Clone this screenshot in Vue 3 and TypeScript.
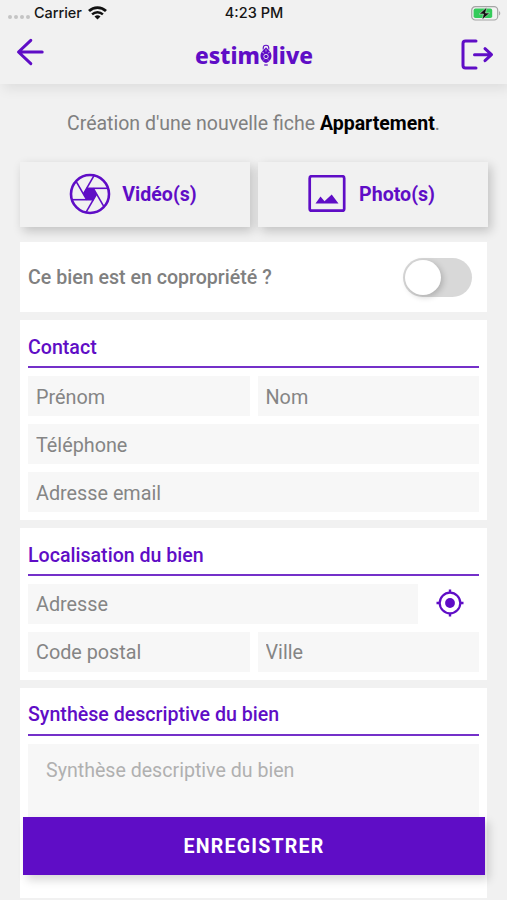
<script setup lang="ts">
import { ref } from 'vue'

const coOwned = ref(false)
const firstName = ref('')
const lastName = ref('')
const phone = ref('')
const email = ref('')
const address = ref('')
const postcode = ref('')
const city = ref('')
const summary = ref('')

const blades: number[] = [0, 60, 120, 180, 240, 300]
</script>

<template>
  <div class="screen">
    <header class="top">
      <div class="status">
        <div class="carrier">
          <span class="dots"><i></i><i></i><i></i><i></i></span>
          <span>Carrier</span>
          <svg class="wifi" width="19" height="14" viewBox="0 0 19 14">
            <path d="M1 5.1a12.2 12.2 0 0 1 17 0" fill="none" stroke="#111" stroke-width="2.8" />
            <path d="M4.1 8.4a7.8 7.8 0 0 1 10.8 0" fill="none" stroke="#111" stroke-width="2.4" />
            <path d="M9.5 13.6 6.5 10.6a4.3 4.3 0 0 1 6 0z" fill="#111" />
          </svg>
        </div>
        <div class="time">4:23 PM</div>
        <svg class="battery" width="30" height="15" viewBox="0 0 30 15">
          <rect x=".7" y=".7" width="26" height="13.3" rx="3.6" fill="none" stroke="#a5a5a5" stroke-width="1.2" />
          <rect x="2.6" y="2.6" width="18.6" height="9.5" rx="1.8" fill="#35cb5b" />
          <path d="M28.1 5v4.6c1.6-.7 1.6-3.9 0-4.6z" fill="#a5a5a5" />
          <path d="M15.8 1.2 8.2 8h4.3l-1.4 5.7L18.7 7h-4.2z" fill="#111" stroke="#f1f1f1" stroke-width=".5" />
        </svg>
      </div>
      <nav class="bar">
        <svg class="back" width="28" height="28" viewBox="0 0 28 28" fill="none" stroke="#5f0dc6" stroke-width="3" stroke-linecap="round" stroke-linejoin="round">
          <path d="M14.800 2.300 2.500 14l12.300 11.600M2.900 14h23.300" />
        </svg>
        <div class="logo">
          <span>estim</span>
          <svg width="12" height="23" viewBox="0 0 12 23">
            <path d="M3.200 5.400V4a2.800 2.800 0 0 1 5.600 0v1.400" fill="none" stroke="#5f0dc6" stroke-width="1.100" />
            <path d="M6 3.200c2 2.600 5.500 4.400 5.500 8.600 0 3.600-2.200 6.200-5.500 7.200C2.700 18 .5 15.400.5 11.800.5 7.600 4 5.800 6 3.200z" fill="#5f0dc6" />
            <path d="M2.300 8.200l1.800 1M9.700 8.200l-1.800 1M6 5.500v2M3 16.500l1-1M9 16.500l-1-1" stroke="#f1f1f1" stroke-width=".7" />
            <circle cx="6" cy="12.500" r="2.200" fill="none" stroke="#f1f1f1" stroke-width=".9" />
            <path d="M4.200 21h3.600" stroke="#5f0dc6" stroke-width="1.200" />
          </svg>
          <span>live</span>
        </div>
        <svg class="exit" width="33" height="32" viewBox="0 0 33 32" fill="none" stroke="#5f0dc6" stroke-width="3" stroke-linecap="round" stroke-linejoin="round">
          <path d="M15 2H4.500Q2 2 2 4.500v22Q2 29 4.500 29H15M13.500 15.700H30M24 9.700l6.500 6-6.500 6" />
        </svg>
      </nav>
    </header>

    <main class="content">
      <p class="intro">Création d'une nouvelle fiche <b>Appartement</b>.</p>

      <div class="media">
        <button class="tile" type="button">
          <svg width="42" height="42" viewBox="-21 -21 42 42">
            <circle r="19" fill="none" stroke="#5f0dc6" stroke-width="2.600" />
            <polygon points="-3.500,-5.700 3.500,-5.700 7,0 3.500,5.700 -3.500,5.700 -7,0" fill="#5f0dc6" />
            <path v-for="angle in blades" :key="angle" :transform="`rotate(${angle})`" d="M-3.500-5.700H18.200" fill="none" stroke="#5f0dc6" stroke-width="1.600" />
          </svg>
          <span>Vidéo(s)</span>
        </button>
        <button class="tile photo" type="button">
          <svg width="38" height="38" viewBox="0 0 38 38">
            <rect x="1.700" y="1.200" width="34.500" height="34.500" rx="2" fill="none" stroke="#5f0dc6" stroke-width="2.700" />
            <path d="M7.500 28.500 12.500 21.500l4 4.700L23.700 19.500 30.500 28.500z" fill="#5f0dc6" />
          </svg>
          <span>Photo(s)</span>
        </button>
      </div>

      <section class="card owned">
        <span>Ce bien est en copropriété ?</span>
        <button class="switch" :class="{ on: coOwned }" type="button" role="switch" :aria-checked="coOwned" @click="coOwned = !coOwned">
          <i></i>
        </button>
      </section>

      <section class="card contact">
        <h2>Contact</h2>
        <div class="row">
          <input v-model="firstName" placeholder="Prénom" />
          <input v-model="lastName" placeholder="Nom" />
        </div>
        <div class="row"><input v-model="phone" type="tel" placeholder="Téléphone" /></div>
        <div class="row"><input v-model="email" type="email" placeholder="Adresse email" /></div>
      </section>

      <section class="card place">
        <h2>Localisation du bien</h2>
        <div class="row">
          <input v-model="address" placeholder="Adresse" />
          <button class="locate" type="button">
            <svg width="28" height="28" viewBox="-14 -14 28 28">
              <circle r="10.300" fill="none" stroke="#5f0dc6" stroke-width="2.200" />
              <circle r="4.900" fill="#5f0dc6" />
              <path d="M0-13.500v3.500M0 10v3.500M-13.500 0h3.500M10 0h3.500" stroke="#5f0dc6" stroke-width="2.400" />
            </svg>
          </button>
        </div>
        <div class="row">
          <input v-model="postcode" placeholder="Code postal" />
          <input v-model="city" placeholder="Ville" />
        </div>
      </section>

      <section class="card summary">
        <h2>Synthèse descriptive du bien</h2>
        <textarea v-model="summary" placeholder="Synthèse descriptive du bien"></textarea>
      </section>
    </main>

    <button class="save" type="button">ENREGISTRER</button>
  </div>
</template>

<style>
body {
  background: #f1f1f1;
}
</style>

<style scoped>
* {
  box-sizing: border-box;
}
.screen {
  position: relative;
  height: 900px;
  overflow: hidden;
  background: #f1f1f1;
  color: #808080;
  font-family: Roboto, "Liberation Sans", sans-serif;
  font-size: 19.6px;
}
button {
  border: 0;
  padding: 0;
  font: inherit;
}
svg {
  display: block;
  flex: none;
}
.top {
  height: 84px;
  box-shadow: 3px 5px 12px rgba(0, 0, 0, 0.08);
}
.status {
  display: grid;
  grid-template-columns: 1fr auto 1fr;
  align-items: center;
  height: 26px;
  padding: 0 7px 0 8px;
  color: #151515;
  font: 500 14.5px/26px Inter, sans-serif;
}
.carrier {
  display: flex;
  align-items: center;
  letter-spacing: -0.05px;
}
.dots {
  display: flex;
  gap: 2px;
  margin: 8px 4px 0 0;
}
.dots i {
  width: 4px;
  height: 4px;
  border-radius: 50%;
  background: #c4c4c4;
}
.wifi {
  margin-left: 6px;
}
.battery {
  justify-self: end;
  margin-right: -1px;
}
.bar {
  display: grid;
  grid-template-columns: 1fr auto 1fr;
  align-items: center;
  height: 54px;
  padding: 0 13px 0 16px;
}
.back {
  margin-top: -2px;
}
.exit {
  justify-self: end;
  margin-top: 4px;
}
.logo {
  display: flex;
  align-items: center;
  color: #5f0dc6;
  font: 800 22.7px/30px "Noto Sans", sans-serif;
  margin-top: 5px;
  margin-right: 2px;
}
.content {
  padding: 0 20px;
}
.intro {
  margin: 0;
  padding-top: 27px;
  height: 78px;
  font-size: 19.5px;
  line-height: 26px;
  text-align: center;
  white-space: nowrap;
}
.intro b {
  color: #000;
}
.media {
  display: grid;
  grid-template-columns: 1fr 1fr;
  gap: 8px;
  margin-right: -1px;
}
.tile {
  height: 65px;
  display: flex;
  align-items: center;
  justify-content: center;
  gap: 11px;
  padding: 0 4px 1px 0;
  background: #f1f1f1;
  color: #5f0dc6;
  font-weight: 700;
  box-shadow: 3px 4px 10px rgba(0, 0, 0, 0.2);
}
.tile.photo {
  gap: 13px;
  padding-right: 3px;
}
.tile span {
  margin-top: 1px;
}
.card {
  position: relative;
  margin-top: 8px;
  padding: 8px;
  background: #fff;
}
.owned {
  display: flex;
  align-items: center;
  justify-content: space-between;
  height: 70px;
  margin-top: 15px;
  padding-right: 15px;
  font-weight: 500;
}
.switch {
  width: 69px;
  height: 39px;
  padding: 2px;
  border-radius: 20px;
  background: #d8d8d8;
}
.switch i {
  display: block;
  width: 36px;
  height: 35px;
  border-radius: 50%;
  background: #fff;
  box-shadow: 2px 2px 6px rgba(0, 0, 0, 0.2);
}
.switch.on {
  background: #5f0dc6;
}
.switch.on i {
  margin-left: 29px;
}
h2 {
  height: 40px;
  margin: 0 0 8px;
  border-bottom: 2px solid #7430c9;
  color: #5f0dc6;
  font-size: 19.6px;
  font-weight: 500;
  line-height: 40px;
}
.summary h2 {
  line-height: 38px;
}
.row {
  display: flex;
  gap: 8px;
}
.row + .row {
  margin-top: 8px;
}
input,
textarea {
  display: block;
  flex: 1;
  min-width: 0;
  height: 40px;
  margin: 0;
  padding: 1px 8px 0;
  border: 0;
  border-radius: 0;
  background: #f7f7f7;
  color: #555;
  font: inherit;
  resize: none;
}
.row input {
  font-size: 19.8px;
}
.contact input {
  padding-top: 2px;
}
input::placeholder {
  color: #858585;
  opacity: 1;
}
.locate {
  width: 53px;
  display: flex;
  align-items: center;
  justify-content: center;
  padding: 0 6px 2px 0;
  background: none;
}
textarea {
  width: 100%;
  height: 120px;
  margin-bottom: 26px;
  padding: 15px 18px;
}
textarea::placeholder {
  color: #b0b0b0;
  opacity: 1;
}
.save {
  position: absolute;
  left: 23px;
  right: 22px;
  bottom: 25px;
  height: 58px;
  background: #5f0dc6;
  color: #fff;
  font-weight: 700;
  letter-spacing: 1.2px;
  box-shadow: 4px 5px 9px rgba(0, 0, 0, 0.16);
}
</style>
